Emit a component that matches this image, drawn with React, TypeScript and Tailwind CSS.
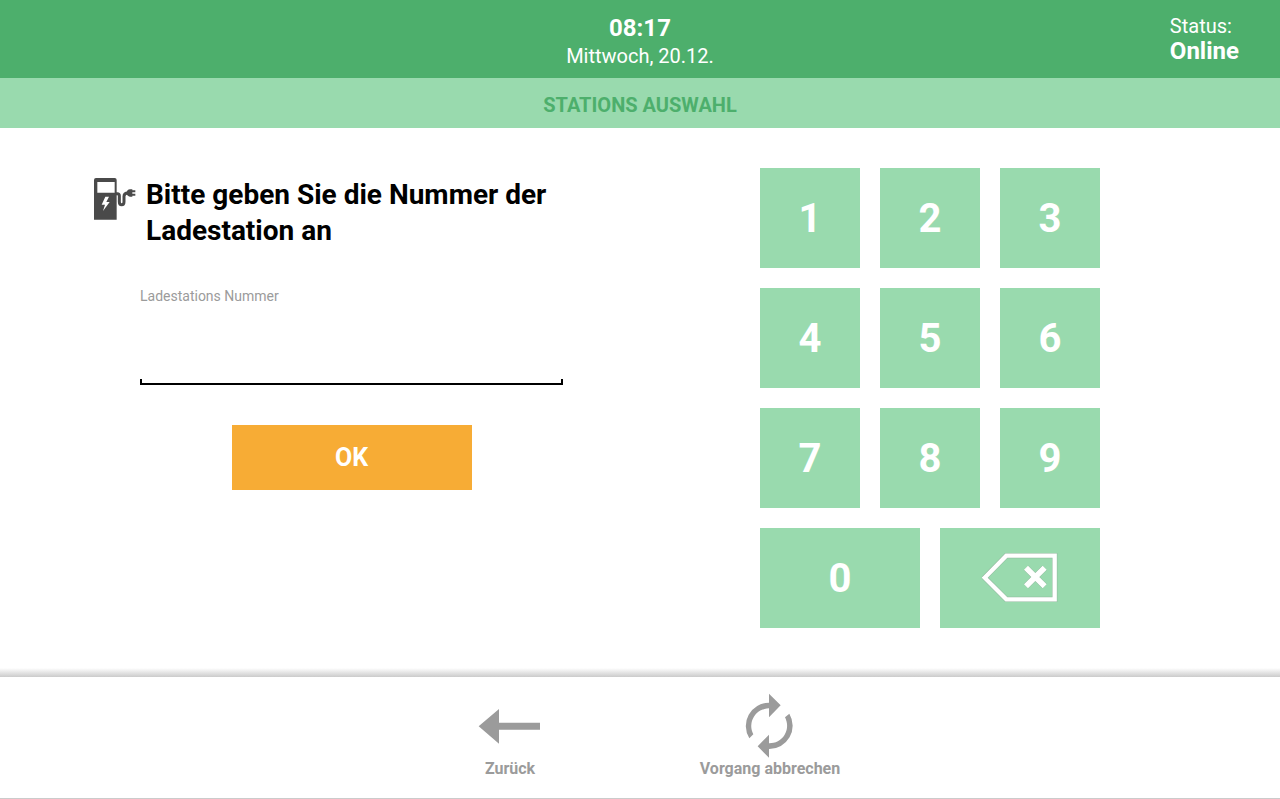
import { useState } from "react";

function PumpIcon() {
  return (
    <svg viewBox="42 39 126 126" className="h-[42px] w-[42px] shrink-0" aria-hidden="true">
      <path
        fill="#4a4a4a"
        fillRule="evenodd"
        d="M48 39H104Q110 39 110 45V164H42V45Q42 39 48 39ZM52 51V83H104V51ZM76 95L65 119H75L69 138L89 111H79L87 95Z"
      />
      <path d="M108 86H112Q118 86 118 92V110Q118 119 125 119Q132 119 132 110V94Q132 84 144 84" fill="none" stroke="#4a4a4a" strokeWidth="9" />
      <path d="M139 84Q141 74 150 73H157V95H150Q141 94 139 84ZM155 76H166V82H155ZM155 86H166V92H155Z" fill="#4a4a4a" />
    </svg>
  );
}

function BackspaceIcon() {
  return (
    <svg viewBox="66 54 228 147" className="mb-1 h-[49px] w-[76px]" aria-hidden="true">
      <path d="M74 128L139 62H284V193H139Z" fill="none" stroke="#8fb59b" strokeWidth="16" />
      <path d="M74 128L139 62H284V193H139Z" fill="none" stroke="#fff" strokeWidth="13" />
      <path d="M198 98L254 154M254 98L198 154" stroke="#8fb59b" strokeWidth="19" />
      <path d="M198 98L254 154M254 98L198 154" stroke="#fff" strokeWidth="17" />
    </svg>
  );
}

function BackIcon() {
  return (
    <svg viewBox="39 54 189 108" className="h-9 w-[63px]" aria-hidden="true">
      <path d="M41 109L102 57V98H225V119H102V161Z" fill="#9b9b9b" />
    </svg>
  );
}

function RestartIcon() {
  return (
    <svg viewBox="165 24 147 198" className="h-[66px] w-[49px]" aria-hidden="true">
      <path
        fill="#9b9b9b"
        d="M237 26L272 61L237 97V70A53 53 0 0 0 190 148L178 160A70 70 0 0 1 237 53ZM237 218L203 184L237 149V175A53 53 0 0 0 285 97L298 86A70 70 0 0 1 237 192Z"
      />
    </svg>
  );
}

const digits = ["1", "2", "3", "4", "5", "6", "7", "8", "9"];
const keyClass = "flex h-[100px] cursor-pointer items-center justify-center bg-[#99daae] pt-0.5 text-[40px] font-bold text-white";
const actionClass = "flex w-[260px] cursor-pointer flex-col items-center text-base leading-5 font-bold text-[#9b9b9b]";

export default function App() {
  const [station, setStation] = useState("");

  return (
    <div className="flex min-h-screen flex-col bg-white font-[Roboto,sans-serif] text-black">
      <header className="grid h-[78px] grid-cols-3 bg-[#4daf6c] text-white">
        <div className="col-start-2 pt-3.5 text-center">
          <p className="text-2xl leading-7 font-bold">08:17</p>
          <p className="text-xl leading-7">Mittwoch, 20.12.</p>
        </div>
        <div className="justify-self-end pt-3.5 pr-[41px]">
          <p className="text-xl leading-6">Status:</p>
          <p className="text-2xl leading-[26px] font-bold">Online</p>
        </div>
      </header>

      <h1 className="flex h-[50px] items-center justify-center bg-[#99daae] pt-1 text-xl font-bold text-[#4daf6c]">
        STATIONS AUSWAHL
      </h1>

      <main className="grid flex-1 grid-cols-2 pt-10">
        <form className="pr-[77px] pl-[94px]" onSubmit={(e) => e.preventDefault()}>
          <div className="flex gap-2.5">
            <div className="pt-2.5">
              <PumpIcon />
            </div>
            <h2 className="pt-[9px] text-[28px] leading-9 font-bold">Bitte geben Sie die Nummer der Ladestation an</h2>
          </div>
          <div className="pt-[37px] pl-[46px]">
            <label htmlFor="station" className="block text-sm leading-5 text-[#9b9b9b]">
              Ladestations Nummer
            </label>
            <input
              id="station"
              inputMode="numeric"
              value={station}
              onChange={(e) => setStation(e.target.value)}
              className="block h-[73px] w-full px-3 text-[40px] font-bold outline-none"
            />
            <div className="h-1.5 border-x-2 border-b-2 border-black" />
            <button type="submit" className="mx-auto mt-10 block h-[65px] w-60 cursor-pointer bg-[#f7ac35] text-[25px] font-bold text-white">
              OK
            </button>
          </div>
        </form>

        <div className="mr-[60px] grid w-[340px] grid-cols-6 content-start gap-5 justify-self-center">
          {digits.map((digit) => (
            <button key={digit} type="button" className={`col-span-2 ${keyClass}`} onClick={() => setStation(station + digit)}>
              {digit}
            </button>
          ))}
          <button type="button" className={`col-span-3 ${keyClass}`} onClick={() => setStation(station + "0")}>
            0
          </button>
          <button type="button" aria-label="Löschen" className={`col-span-3 ${keyClass}`} onClick={() => setStation(station.slice(0, -1))}>
            <BackspaceIcon />
          </button>
        </div>
      </main>

      <footer>
        <div className="h-[9px] bg-linear-to-b from-white to-[#cbcbcb]" />
        <div className="flex h-[122px] justify-center border-b border-[#cbcbcb] pt-4">
          <button type="button" className={actionClass}>
            <span className="flex h-[66px] items-center pr-0.5">
              <BackIcon />
            </span>
            Zurück
          </button>
          <button type="button" className={actionClass}>
            <span className="flex h-[66px] items-center pr-0.5">
              <RestartIcon />
            </span>
            Vorgang abbrechen
          </button>
        </div>
      </footer>
    </div>
  );
}
